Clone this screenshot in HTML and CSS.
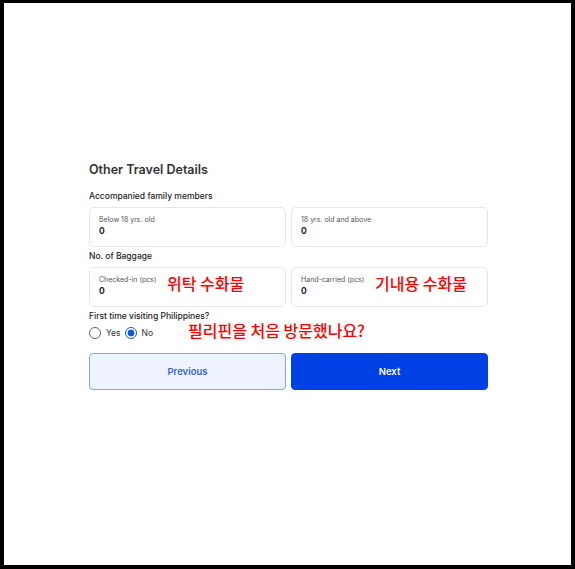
FILE: index.html
```html
<!DOCTYPE html>
<html>
<head>
<meta charset="utf-8">
<link rel="stylesheet" href="styles.css">
</head>
<body>
<div class="frame">
  <div class="form">
    <h2 class="title">Other Travel Details</h2>
    <div class="section-label">Accompanied family members</div>
    <div class="row">
      <div class="field">
        <div class="field-label">Below 18 yrs. old</div>
        <div class="field-value">0</div>
      </div>
      <div class="field">
        <div class="field-label">18 yrs. old and above</div>
        <div class="field-value">0</div>
      </div>
    </div>
    <div class="section-label">No. of Baggage</div>
    <div class="row">
      <div class="field">
        <div class="field-label">Checked-in (pcs)</div>
        <div class="field-value">0</div>
        <span class="note note-checked">위탁 수화물</span>
      </div>
      <div class="field">
        <div class="field-label">Hand-carried (pcs)</div>
        <div class="field-value">0</div>
        <span class="note note-hand">기내용 수화물</span>
      </div>
    </div>
    <div class="section-label q">First time visiting Philippines?</div>
    <div class="radios">
      <label class="radio"><span class="dot"></span>Yes</label>
      <label class="radio"><span class="dot on"></span>No</label>
      <span class="note note-q">필리핀을 처음 방문했나요?</span>
    </div>
    <div class="buttons">
      <button class="btn btn-prev">Previous</button>
      <button class="btn btn-next">Next</button>
    </div>
  </div>
</div>
</body>
</html>
```
FILE: styles.css
```css
html, body {
  margin: 0;
  padding: 0;
  background: #000;
}
body {
  width: 575px;
  height: 569px;
  font-family: Inter, "Noto Sans", sans-serif;
  color: #222;
}
.frame {
  box-sizing: border-box;
  width: 575px;
  height: 569px;
  background: #fff;
  border-style: solid;
  border-color: #000;
  border-width: 3px 4px 4px 4px;
  padding-top: 159px;
}
.form {
  width: 399px;
  margin-left: 85px;
}
.title {
  margin: 0 0 12px 0;
  font-size: 12.5px;
  line-height: 16px;
  font-weight: 600;
  color: #333;
}
.section-label {
  font-size: 8.5px;
  line-height: 12px;
  font-weight: 500;
  color: #222;
  margin-bottom: 5px;
}
.row {
  display: flex;
  gap: 5px;
  margin-bottom: 3px;
}
.field {
  position: relative;
  box-sizing: border-box;
  flex: 1;
  height: 40px;
  border: 1px solid #e6e6e6;
  border-radius: 5px;
  padding: 7px 9px 0 9px;
}
.field-label {
  font-size: 7px;
  line-height: 10px;
  color: #555;
}
.field-value {
  font-size: 8.5px;
  line-height: 12px;
  font-weight: 700;
  color: #222;
}
.note {
  position: absolute;
  font-family: "Noto Sans CJK KR", sans-serif;
  color: #ff0000;
  font-size: 16px;
  font-weight: 500;
  line-height: 18px;
  white-space: nowrap;
}
.note-checked { left: 77px; top: 6px; }
.note-hand { left: 83px; top: 6px; }
.q {
  margin-top: 3px;
  margin-bottom: 4px;
}
.radios {
  position: relative;
  display: flex;
  align-items: center;
  gap: 4px;
  height: 14px;
  font-size: 8.5px;
  color: #333;
}
.radio {
  display: flex;
  align-items: center;
  gap: 5px;
}
.dot {
  box-sizing: border-box;
  width: 12px;
  height: 12px;
  border-radius: 50%;
  border: 1px solid #666;
  background: #fff;
}
.dot.on {
  border: 1.5px solid #0a5bd6;
  background: radial-gradient(circle, #0a5bd6 0 3.2px, #fff 3.7px);
}
.note-q { left: 99px; top: -5px; }
.buttons {
  display: flex;
  gap: 5px;
  margin-top: 13px;
}
.btn {
  flex: 1;
  height: 37px;
  border-radius: 4px;
  font-family: Inter, "Noto Sans", sans-serif;
  font-size: 9.5px;
  font-weight: 600;
  cursor: pointer;
}
.btn-prev {
  background: #eef3fd;
  border: 1px solid #86a5ef;
  color: #3a63d8;
}
.btn-next {
  background: #0041e6;
  border: 1px solid #0041e6;
  color: #fff;
}
```
